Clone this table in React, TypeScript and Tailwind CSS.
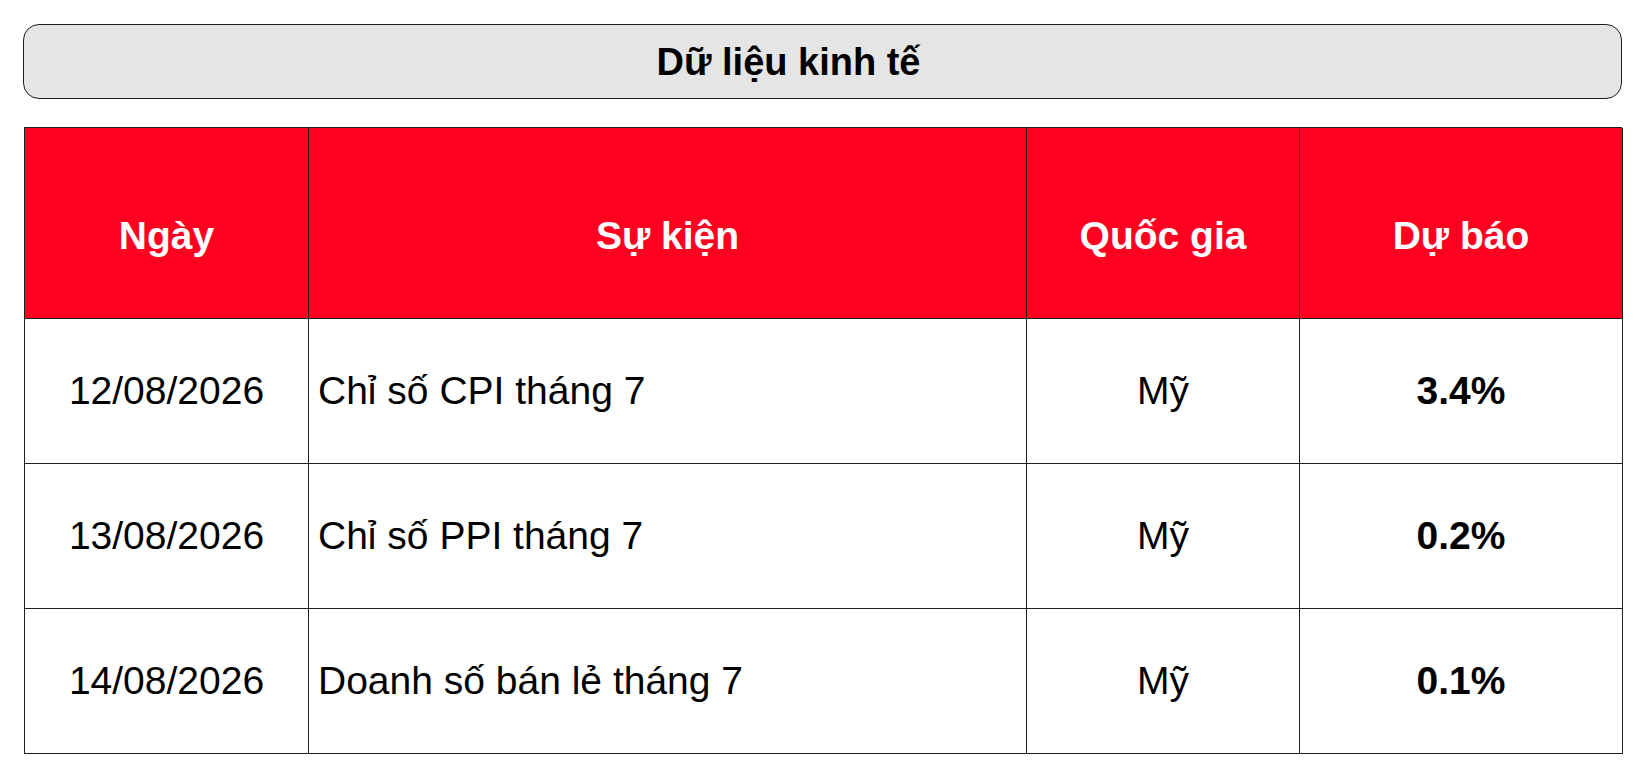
const rows = [
  { date: '12/08/2026', event: 'Chỉ số CPI tháng 7', country: 'Mỹ', forecast: '3.4%' },
  { date: '13/08/2026', event: 'Chỉ số PPI tháng 7', country: 'Mỹ', forecast: '0.2%' },
  { date: '14/08/2026', event: 'Doanh số bán lẻ tháng 7', country: 'Mỹ', forecast: '0.1%' },
]

const headers = ['Ngày', 'Sự kiện', 'Quốc gia', 'Dự báo']

export default function App() {
  return (
    <div className="min-h-screen bg-white pl-[23px] pt-[24px] font-['Liberation_Sans',Arial,sans-serif] text-black">
      <div className="w-[1599px] h-[75px] rounded-[16px] border border-[#1f1f1f] bg-[#e5e5e5] flex items-center justify-center pr-[68px]">
        <h1 className="text-[38px] font-bold leading-none">Dữ liệu kinh tế</h1>
      </div>

      <div className="ml-[1px] mt-[28px] w-[1598px] grid grid-cols-[284px_718px_273px_323px] border-l border-t border-[#1f1f1f]">
        {headers.map((h) => (
          <div
            key={h}
            className="h-[191px] bg-[#ff0021] border-r border-b border-[#1f1f1f] flex items-center justify-center pt-[26px] text-white text-[39px] font-bold"
          >
            {h}
          </div>
        ))}

        {rows.map((r) => (
          <div key={r.date} className="contents">
            <div className="h-[145px] border-r border-b border-[#1f1f1f] flex items-center justify-center text-[39px]">
              {r.date}
            </div>
            <div className="h-[145px] border-r border-b border-[#1f1f1f] flex items-center pl-[9px] text-[39px]">
              {r.event}
            </div>
            <div className="h-[145px] border-r border-b border-[#1f1f1f] flex items-center justify-center text-[39px]">
              {r.country}
            </div>
            <div className="h-[145px] border-r border-b border-[#1f1f1f] flex items-center justify-center text-[39px] font-bold">
              {r.forecast}
            </div>
          </div>
        ))}
      </div>
    </div>
  )
}
